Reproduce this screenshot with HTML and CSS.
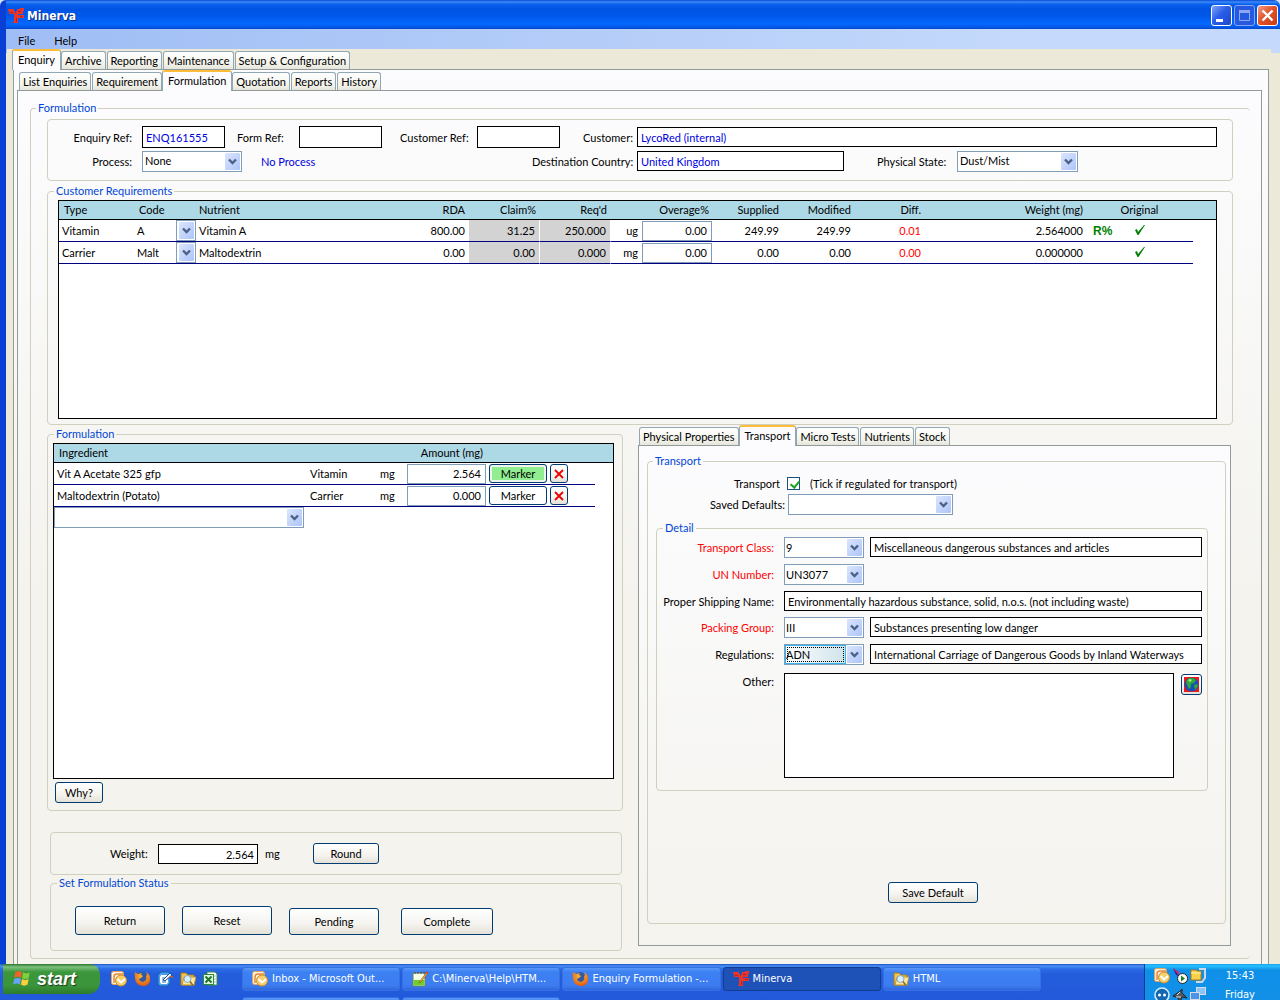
FILE: index.html
```html
<!DOCTYPE html>
<html lang="en">
<head>
  <meta charset="UTF-8">
  <title>Minerva</title>
  <link rel="stylesheet" href="styles.css">
</head>
<body>
  <!-- shared icons -->
  <svg class="sprite" width="0" height="0" aria-hidden="true">
    <defs>
      <linearGradient id="dropFill" x1="0" y1="0" x2="1" y2="1">
        <stop offset="0" stop-color="#dbe5fd"/>
        <stop offset="1" stop-color="#adc5f9"/>
      </linearGradient>
      <radialGradient id="foxFill" cx="0.5" cy="0.3" r="0.8">
        <stop offset="0" stop-color="#ffc23a"/>
        <stop offset="1" stop-color="#d8480c"/>
      </radialGradient>
    </defs>
    <symbol id="drop" viewBox="0 0 15 17">
      <rect width="15" height="17" rx="1" fill="url(#dropFill)"/>
      <path d="M4 6.500l3.500 3.500L11 6.500" fill="none" stroke="#4d6185" stroke-width="2.400"/>
    </symbol>
    <symbol id="logo" viewBox="0 0 16 16">
      <path d="M0 1h6v2H0zM1 3h6v3H1zM9 1h4v3H9zM12 0h4v3h-4zM8 3h7v3H8zM6 5h4v10H6zM9 7h7v3H9zM5 14h5v1H5z" fill="#e8352c"/>
      <path d="M2 4.500h3M10 3.500h3M12 8.500h3M8.500 10v4" stroke="#b82020" fill="none"/>
    </symbol>
    <symbol id="outlook" viewBox="0 0 16 16">
      <rect x="0.500" y="0.500" width="12" height="13" rx="2" fill="#fff1dc" stroke="#e6a15a"/>
      <path d="M3 12V6a3 3 0 0 1 3-3h6" fill="none" stroke="#e08a3c" stroke-width="1.500"/>
      <circle cx="10" cy="9.500" r="5.500" fill="#f7cf6e" stroke="#c98b2a"/>
      <path d="M6.500 8l3.500 3.500L14 8" fill="none" stroke="#fff" stroke-width="2"/>
    </symbol>
    <symbol id="firefox" viewBox="0 0 16 16">
      <circle cx="8" cy="7" r="6" fill="#35589e"/>
      <path d="M1 1l3 2 4-1-1 2 2 1-2 2-2 1 1 2 3 1c3-1 4-3 3-6l1-1c0-2-1-2-1-3 4 2 5 6 4 9-1 4-4 5-7 5-4 0-8-3-8-8 0-2-1-4 0-6z" fill="url(#foxFill)"/>
    </symbol>
    <symbol id="desktop" viewBox="0 0 16 16">
      <path d="M1 4l3-3h8l1 2v9l-3 3H3l-2-2z" fill="#49a0ea" stroke="#1a62b8"/>
      <path d="M4 4h7v7l-1 2H4l-1-2V6z" fill="#fff"/>
      <path d="M5 7h4M5 9h3M5 11h4" stroke="#2a7ad0"/>
      <path d="M6 9l7-7 2 2-7 6z" fill="#eaf4ff" stroke="#1b4c94"/>
      <path d="M12 5h4l-1 2z" fill="#e85a1c"/>
    </symbol>
    <symbol id="folder" viewBox="0 0 16 16">
      <path d="M1 2h5l2 2h6v10H1z" fill="#f3c64f" stroke="#a87a1c"/>
      <path d="M4 6h12l-2 8H2z" fill="#ffe79a" stroke="#c1922b"/>
      <circle cx="7.500" cy="8" r="3.500" fill="#d5efff" stroke="#8aa9c4"/>
      <path d="M10 10.500l3 4" stroke="#8a6d2a" stroke-width="1.500"/>
    </symbol>
    <symbol id="excel" viewBox="0 0 16 16">
      <path d="M4 1h8l2 2v11H4z" fill="#fff" stroke="#3c8a46"/>
      <path d="M11 5h2M11 8h2M11 11h2" stroke="#8dc294"/>
      <rect x="0.500" y="3.500" width="10" height="10" fill="#e3f4e2" stroke="#2f8a3b"/>
      <path d="M2.500 5.500l6 6M8.500 5.500l-6 6" stroke="#1d7a2c" stroke-width="2"/>
    </symbol>
    <symbol id="notepad" viewBox="0 0 16 16">
      <path d="M1 2h12v13H1z" fill="#f4ffe8" stroke="#6b7a62"/>
      <path d="M1.500 9h11v5.500h-11z" fill="#6fce2c"/>
      <path d="M3 1v2M6 1v2M9 1v2M12 1v2" stroke="#444"/>
      <path d="M15 1L8 10l-1 2 2-1 7-9z" fill="#f7b83a" stroke="#8a4a10" stroke-width="0.600"/>
      <path d="M14 1l2 1.500" stroke="#e8321c" stroke-width="1.500"/>
    </symbol>
    <symbol id="cross" viewBox="0 0 10 10">
      <path d="M1 1l8 8M9 1L1 9" stroke="#f00000" stroke-width="1.800"/>
    </symbol>
    <symbol id="tick" viewBox="0 0 12 11">
      <path d="M1 6l2-1 1 3 6-7 1 0-6.500 10H3.500z" fill="#008000"/>
    </symbol>
  </svg>

  <div class="window">
    <header class="titlebar">
      <svg class="icon"><use href="#logo"/></svg>
      <h1>Minerva</h1>
      <div class="win-buttons">
        <button class="win-btn" aria-label="Minimize"><svg viewBox="0 0 19 19"><path d="M4 13h7v3H4z" fill="#fff"/></svg></button>
        <button class="win-btn dim" aria-label="Maximize"><svg viewBox="0 0 19 19"><path d="M4.500 5.500h10v9h-10z" fill="none" stroke="#8fa6f0"/><path d="M4 4h11v3H4z" fill="#8fa6f0"/></svg></button>
        <button class="win-btn close" aria-label="Close"><svg viewBox="0 0 19 19"><path d="M4.500 4.500l10 10M14.500 4.500l-10 10" stroke="#fff" stroke-width="2.400"/></svg></button>
      </div>
    </header>

    <nav class="menubar">
      <a href="#">File</a>
      <a href="#">Help</a>
    </nav>

    <div class="main">
      <div class="tabs">
        <button class="tab active">Enquiry</button>
        <button class="tab">Archive</button>
        <button class="tab">Reporting</button>
        <button class="tab">Maintenance</button>
        <button class="tab">Setup &amp; Configuration</button>
      </div>
      <div class="page outer-page">
        <div class="tabs sub-tabs">
          <button class="tab">List Enquiries</button>
          <button class="tab">Requirement</button>
          <button class="tab active">Formulation</button>
          <button class="tab">Quotation</button>
          <button class="tab">Reports</button>
          <button class="tab">History</button>
        </div>
        <div class="page inner-page">
          <fieldset class="formulation">
            <legend>Formulation</legend>

            <div class="panel enquiry">
              <div class="row">
                <label class="first" for="enquiryRef">Enquiry Ref:</label>
                <input class="box ref" type="text" id="enquiryRef" value="ENQ161555">
                <label class="form-ref" for="formRef">Form Ref:</label>
                <input class="box ref" type="text" id="formRef">
                <label class="customer-ref" for="customerRef">Customer Ref:</label>
                <input class="box ref" type="text" id="customerRef">
                <label class="customer" for="customer">Customer:</label>
                <input class="box grow" type="text" id="customer" value="LycoRed (internal)">
              </div>
              <div class="row">
                <label class="first" for="process">Process:</label>
                <span class="combo process"><select id="process"><option>None</option></select><svg><use href="#drop"/></svg></span>
                <span class="process-name">No Process</span>
                <label class="country" for="country">Destination Country:</label>
                <input class="box country-box" type="text" id="country" value="United Kingdom">
                <label class="state" for="state">Physical State:</label>
                <span class="combo state-box"><select id="state"><option>Dust/Mist</option></select><svg><use href="#drop"/></svg></span>
              </div>
            </div>

            <fieldset class="requirements">
              <legend>Customer Requirements</legend>
              <div class="list">
                <table>
                  <colgroup>
                    <col class="w75"><col class="w42"><col class="w20"><col>
                    <col class="w70"><col class="w71"><col class="w71"><col class="w31"><col class="w71">
                    <col class="w70"><col class="w72"><col class="w70"><col class="w162"><col class="w30">
                    <col class="w45"><col class="w31"><col class="w23">
                  </colgroup>
                  <thead>
                    <tr>
                      <th>Type</th><th>Code</th><th></th><th class="nutrient">Nutrient</th>
                      <th class="num">RDA</th><th class="num">Claim%</th><th class="num">Req'd</th><th></th><th class="num">Overage%</th>
                      <th class="num">Supplied</th><th class="num">Modified</th><th class="num">Diff.</th><th class="num">Weight (mg)</th><th></th>
                      <th class="mid">Original</th><th></th><th></th>
                    </tr>
                  </thead>
                  <tbody>
                    <tr>
                      <td>Vitamin</td><td>A</td>
                      <td class="cell"><span class="combo code"><select aria-label="Code"><option></option></select><svg><use href="#drop"/></svg></span></td>
                      <td class="nutrient">Vitamin A</td>
                      <td class="num">800.00</td><td class="num grey">31.25</td><td class="num grey">250.000</td><td class="num">ug</td>
                      <td class="cell"><input class="edit" type="text" value="0.00" aria-label="Overage"></td>
                      <td class="num">249.99</td><td class="num">249.99</td><td class="num red">0.01</td><td class="num">2.564000</td>
                      <td class="rpc">R%</td><td class="mid"><svg class="tick"><use href="#tick"/></svg></td><td></td><td class="edge"></td>
                    </tr>
                    <tr>
                      <td>Carrier</td><td>Malt</td>
                      <td class="cell"><span class="combo code"><select aria-label="Code"><option></option></select><svg><use href="#drop"/></svg></span></td>
                      <td class="nutrient">Maltodextrin</td>
                      <td class="num">0.00</td><td class="num grey">0.00</td><td class="num grey">0.000</td><td class="num">mg</td>
                      <td class="cell"><input class="edit" type="text" value="0.00" aria-label="Overage"></td>
                      <td class="num">0.00</td><td class="num">0.00</td><td class="num red">0.00</td><td class="num">0.000000</td>
                      <td></td><td class="mid"><svg class="tick"><use href="#tick"/></svg></td><td></td><td class="edge"></td>
                    </tr>
                  </tbody>
                </table>
              </div>
            </fieldset>

            <div class="columns">
              <div class="left">
                <fieldset class="ingredients">
                  <legend>Formulation</legend>
                  <div class="list">
                    <table>
                      <colgroup>
                        <col><col class="w70"><col class="w30"><col class="w80"><col class="w62"><col class="w46"><col class="w18">
                      </colgroup>
                      <thead>
                        <tr><th>Ingredient</th><th></th><th></th><th class="num">Amount (mg)</th><th></th><th></th><th></th></tr>
                      </thead>
                      <tbody>
                        <tr>
                          <td>Vit A Acetate 325 gfp</td><td>Vitamin</td><td>mg</td>
                          <td class="cell"><input class="edit" type="text" value="2.564" aria-label="Amount"></td>
                          <td class="cell"><button class="btn marker on">Marker</button></td>
                          <td class="cell"><button class="btn remove" aria-label="Remove"><svg><use href="#cross"/></svg></button></td>
                          <td class="edge"></td>
                        </tr>
                        <tr>
                          <td>Maltodextrin (Potato)</td><td>Carrier</td><td>mg</td>
                          <td class="cell"><input class="edit" type="text" value="0.000" aria-label="Amount"></td>
                          <td class="cell"><button class="btn marker">Marker</button></td>
                          <td class="cell"><button class="btn remove" aria-label="Remove"><svg><use href="#cross"/></svg></button></td>
                          <td class="edge"></td>
                        </tr>
                      </tbody>
                    </table>
                    <span class="combo new-ingredient"><select aria-label="Add ingredient"><option></option></select><svg><use href="#drop"/></svg></span>
                  </div>
                  <button class="btn why">Why?</button>
                </fieldset>

                <div class="panel weight">
                  <label for="weight">Weight:</label>
                  <input class="box total" type="text" id="weight" value="2.564">
                  <span class="unit">mg</span>
                  <button class="btn round">Round</button>
                </div>

                <fieldset class="status">
                  <legend>Set Formulation Status</legend>
                  <div class="status-buttons">
                    <button class="btn">Return</button>
                    <button class="btn">Reset</button>
                    <button class="btn short">Pending</button>
                    <button class="btn short complete">Complete</button>
                  </div>
                </fieldset>
              </div>

              <div class="right">
                <div class="tabs">
                  <button class="tab">Physical Properties</button>
                  <button class="tab active">Transport</button>
                  <button class="tab">Micro Tests</button>
                  <button class="tab">Nutrients</button>
                  <button class="tab">Stock</button>
                </div>
                <div class="page transport-page">
                  <fieldset class="transport">
                    <legend>Transport</legend>
                    <div class="row">
                      <label class="tick-label" for="regulated">Transport</label>
                      <input class="check" type="checkbox" id="regulated" checked>
                      <span>(Tick if regulated for transport)</span>
                    </div>
                    <div class="row defaults">
                      <label for="defaults">Saved Defaults:</label>
                      <span class="combo"><select id="defaults"><option></option></select><svg><use href="#drop"/></svg></span>
                    </div>

                    <fieldset class="detail">
                      <legend>Detail</legend>
                      <div class="detail-grid">
                        <label class="red" for="class">Transport Class:</label>
                        <span class="combo"><select id="class"><option>9</option></select><svg><use href="#drop"/></svg></span>
                        <input class="box" type="text" value="Miscellaneous dangerous substances and articles" aria-label="Class description">

                        <label class="red" for="un">UN Number:</label>
                        <span class="combo"><select id="un"><option>UN3077</option></select><svg><use href="#drop"/></svg></span>
                        <span></span>

                        <label for="shipping">Proper Shipping Name:</label>
                        <input class="box wide" type="text" id="shipping" value="Environmentally hazardous substance, solid, n.o.s. (not including waste)">

                        <label class="red" for="packing">Packing Group:</label>
                        <span class="combo"><select id="packing"><option>III</option></select><svg><use href="#drop"/></svg></span>
                        <input class="box" type="text" value="Substances presenting low danger" aria-label="Packing description">

                        <label for="regs">Regulations:</label>
                        <span class="combo focused"><select id="regs"><option>ADN</option></select><svg><use href="#drop"/></svg></span>
                        <input class="box" type="text" value="International Carriage of Dangerous Goods by Inland Waterways" aria-label="Regulation description">

                        <label for="other">Other:</label>
                        <div class="other wide">
                          <textarea id="other"></textarea>
                          <button class="btn globe" aria-label="Look up on the web">
                            <svg viewBox="0 0 15 15"><rect width="15" height="15" fill="#f01818"/><circle cx="7.500" cy="7.500" r="7" fill="#1450b8"/><path d="M2 4l3-3h4l3 2-2 3-3 1v3l-2 2-2-4zM10 8l3-1 1 2-3 4z" fill="#2faa3a"/><path d="M4 3l2-1 2 1-2 2z" fill="#a6f088"/></svg>
                          </button>
                        </div>
                      </div>
                    </fieldset>
                    <button class="btn save">Save Default</button>
                  </fieldset>
                </div>
              </div>
            </div>
          </fieldset>
        </div>
      </div>
    </div>
  </div>

  <footer class="taskbar">
    <button class="start">
      <svg viewBox="0 0 18 18"><path d="M3 3q3-2 6 0L8 8q-3-2-6 0z" fill="#f0622a"/><path d="M10 3q3 2 6 0l-1 5q-3 2-6 0z" fill="#7fd03c"/><path d="M2 9q3-2 6 0l-1 5q-3-2-6 0z" fill="#6aa4f8"/><path d="M9 9q3 2 6 0l-1 5q-3 2-6 0z" fill="#fbd03a"/></svg>
      start
    </button>
    <div class="quick">
      <svg class="icon"><use href="#outlook"/></svg>
      <svg class="icon"><use href="#firefox"/></svg>
      <svg class="icon"><use href="#desktop"/></svg>
      <svg class="icon"><use href="#folder"/></svg>
      <svg class="icon"><use href="#excel"/></svg>
    </div>
    <div class="tasks">
      <button class="task"><svg class="icon"><use href="#outlook"/></svg>Inbox - Microsoft Out...</button>
      <button class="task"><svg class="icon"><use href="#notepad"/></svg>C:\Minerva\Help\HTM...</button>
      <button class="task"><svg class="icon"><use href="#firefox"/></svg>Enquiry Formulation -...</button>
      <button class="task active"><svg class="icon"><use href="#logo"/></svg>Minerva</button>
      <button class="task"><svg class="icon"><use href="#folder"/></svg>HTML</button>
      <button class="task" aria-label="More windows"></button>
      <button class="task" aria-label="More windows"></button>
    </div>
    <div class="tray">
      <div class="tray-icons">
        <svg class="icon"><use href="#outlook"/></svg>
        <svg class="icon" viewBox="0 0 16 16"><path d="M1 0l6 4-1 4z" fill="#e02060"/><path d="M1 0l3 7 3 1z" fill="#3020a0"/><circle cx="10.500" cy="10.500" r="5" fill="#fff" stroke="#222"/><path d="M9 7.500v6l4-3z" fill="#18801c"/></svg>
        <svg class="icon" viewBox="0 0 16 16"><path d="M9 1h6v9l-3 4H6" fill="none" stroke="#cfd8e4" stroke-width="2"/><path d="M1 2h5l1 1h4v9H1z" fill="#fbd14a" stroke="#a8781c"/><path d="M1 5h10" stroke="#fff2b0"/></svg>
        <svg class="icon" viewBox="0 0 16 16"><circle cx="8" cy="8" r="7" fill="#1468b0" stroke="#d8ecff" stroke-width="1.500"/><circle cx="5.500" cy="8" r="1.500" fill="#fff"/><circle cx="10.500" cy="8" r="1.500" fill="#fff"/></svg>
        <svg class="icon" viewBox="0 0 16 16"><path d="M1 9l6-4 3-3v4l5 5-5-1-2 5-2-4z" fill="#505860" stroke="#20242a"/><path d="M5 8l3-3M4 10h5" stroke="#e8e8e8"/></svg>
        <svg class="icon" viewBox="0 0 16 16"><rect x="6.500" y="0.500" width="9" height="7" fill="#8cc4f8" stroke="#d6dce8"/><rect x="0.500" y="5.500" width="9" height="7" fill="#4c94e8" stroke="#d6dce8"/><path d="M3 15h6" stroke="#c6ccd8" stroke-width="2"/></svg>
      </div>
      <div class="clock"><span>15:43</span><span>Friday</span></div>
    </div>
  </footer>
</body>
</html>
```
FILE: styles.css
```css
* {
  box-sizing: border-box;
}
body {
  margin: 0;
  height: 100vh;
  display: flex;
  flex-direction: column;
  overflow: hidden;
  font-family: Lato, "Liberation Sans", Arial, sans-serif;
  font-size: 11px;
  line-height: 14px;
  color: #000;
  background: #d4e2f8;
}
button, input, select, textarea {
  font: inherit;
  color: inherit;
  margin: 0;
}
.sprite {
  position: absolute;
}
.icon {
  width: 16px;
  height: 16px;
  flex: none;
}

/* window frame */
.window {
  flex: 1;
  min-height: 0;
  overflow: hidden;
  display: flex;
  flex-direction: column;
  border-left: 6px solid #0a3fd6;
  border-radius: 6px 6px 0 0;
  background: #ece9d8;
}
.titlebar {
  display: flex;
  align-items: center;
  height: 29px;
  flex: none;
  margin-left: -3px;
  padding: 2px 2px 0 5px;
  background: linear-gradient(#0a49d8 0, #3b8cf8 2px, #0c62ee 4px, #0054e3 9px, #0058ea 16px, #0468fe 24px, #0353e0 28px, #0540c0 29px);
}
.titlebar h1 {
  flex: 1;
  margin: 0 0 0 3px;
  font: bold 12px/16px "DejaVu Sans Condensed", "DejaVu Sans", sans-serif;
  color: #fff;
  text-shadow: 1px 1px #0a2a80;
}
.win-buttons {
  display: flex;
  gap: 2px;
}
.win-btn {
  width: 21px;
  height: 21px;
  padding: 0;
  border: 1px solid #fff;
  border-radius: 3px;
  background: linear-gradient(135deg, #7ea4f6, #2a5ee8 45%, #1c48cc);
}
.win-btn svg {
  display: block;
  width: 19px;
  height: 19px;
}
.win-btn.dim {
  border-color: #86a4f2;
  background: #2459e0;
}
.win-btn.close {
  background: linear-gradient(135deg, #f0a088, #e2532c 45%, #c83a10);
}
.menubar {
  display: flex;
  flex: none;
  gap: 19px;
  height: 24px;
  padding: 5px 12px;
  background: linear-gradient(90deg, #9fbdf5, #c4d9fb 80%);
}
.menubar a {
  color: #000;
  text-decoration: none;
}

/* tabs */
.main {
  flex: 1;
  min-height: 0;
  display: flex;
  flex-direction: column;
  margin: -4px 9px 0 1px;
  padding: 0 2px 0 6px;
  background: #ece9d8;
  z-index: 1;
}
.tabs {
  display: flex;
  align-items: flex-end;
  gap: 1px;
  height: 21px;
  margin-bottom: -1px;
}
.tab {
  height: 18px;
  padding: 0 3px;
  margin-bottom: 1px;
  border: 1px solid #91a7b4;
  border-bottom: 0;
  border-radius: 3px 3px 0 0;
  background: linear-gradient(#fff, #f3f3ec 70%, #e6e5da);
  white-space: nowrap;
}
.tab.active {
  position: relative;
  height: 21px;
  margin: 0 -1px;
  padding: 0 5px 2px;
  border-top: 2px solid #ffbc38;
  background: #fcfcfe;
}
.page {
  border: 1px solid #919b9c;
  background: linear-gradient(#fcfcfe, #f4f3ee 500px);
}
.outer-page {
  flex: 1;
  display: flex;
  flex-direction: column;
  padding: 0 6px 0 3px;
  border-bottom: 0;
}
.sub-tabs {
  padding-left: 2px;
}
.inner-page {
  flex: 1;
  padding: 10px 11px 0 12px;
  border-bottom: 0;
}

/* group boxes */
fieldset {
  min-width: 0;
  margin: 0;
  padding: 0;
  border: 1px solid #d0d0bf;
  border-radius: 4px;
}
legend {
  margin-left: 5px;
  padding: 0 2px;
  color: #0046d5;
}
.panel {
  border: 1px solid #d0d0bf;
  border-radius: 4px;
}
.formulation {
  padding: 4px 17px 7px 16px;
  border-right: 0;
}
.formulation > legend {
  margin-left: -11px;
}
.row {
  display: flex;
  align-items: center;
}

/* fields */
.box {
  height: 20px;
  min-width: 0;
  padding: 1px 3px 0;
  border: 1px solid #000;
  border-radius: 0;
  background: #fff;
}
.grow {
  flex: 1;
}
.combo {
  position: relative;
  display: block;
  flex: none;
  height: 21px;
}
.combo select {
  appearance: none;
  display: block;
  width: 100%;
  height: 100%;
  padding: 0 1px;
  border: 1px solid #7f9db9;
  border-radius: 0;
  background: #fff;
}
.combo svg {
  position: absolute;
  top: 2px;
  right: 2px;
  width: 15px;
  height: 17px;
  pointer-events: none;
}
.btn {
  padding: 0;
  border: 1px solid #003c74;
  border-radius: 3px;
  background: linear-gradient(#fff, #f4f3ee 60%, #e4e1d6);
}
.red {
  color: #f00;
}

/* enquiry header */
.enquiry {
  height: 62px;
  padding: 6px 15px 0 0;
}
.enquiry .row {
  height: 22px;
}
.enquiry .row + .row {
  margin-top: 2px;
}
.enquiry label, .process-name {
  flex: none;
  padding-top: 2px;
}
.enquiry .box {
  color: #0000e0;
}
.enquiry select {
  padding-left: 2px;
}
.enquiry .first {
  width: 94px;
  padding-right: 10px;
  text-align: right;
}
.ref {
  width: 83px;
  height: 22px;
}
.form-ref {
  width: 74px;
  padding-left: 12px;
}
.customer-ref {
  width: 95px;
  padding-left: 18px;
}
.customer {
  width: 77px;
  padding-left: 23px;
}
.process {
  width: 100px;
}
.process-name {
  width: 290px;
  padding-left: 19px;
  color: #0000e0;
}
.country {
  width: 105px;
}
.country-box {
  width: 207px;
}
.state {
  width: 113px;
  padding-left: 33px;
}
.state-box {
  width: 121px;
}

/* lists */
.list {
  border: 1px solid #000;
  background: #fff;
}
table {
  width: 100%;
  table-layout: fixed;
  border-collapse: separate;
  border-spacing: 0;
}
th {
  height: 19px;
  padding: 0 5px;
  font-weight: normal;
  text-align: left;
  white-space: nowrap;
  background: #add8e6;
  border-bottom: 1px solid #000;
}
td {
  height: 22px;
  padding: 0 3px;
  white-space: nowrap;
  border-bottom: 1px solid #000080;
}
td.edge {
  border-bottom: 0;
}
.nutrient {
  padding-left: 3px;
}
.num {
  padding-right: 4px;
  text-align: right;
}
.mid {
  padding: 0;
  text-align: center;
}
.cell {
  padding: 0;
}
.grey {
  background: #d3d3d3;
  border-right: 1px solid #fff;
}
.rpc {
  padding-left: 6px;
  font: bold 12px/14px "Liberation Sans", Arial, sans-serif;
  color: #008000;
}
.tick {
  width: 12px;
  height: 11px;
}
.edit {
  display: block;
  width: calc(100% - 1px);
  height: 20px;
  padding: 0 4px;
  border: 1px solid #7f9db9;
  text-align: right;
  background: #fff;
}
.w18 { width: 18px; }
.w20 { width: 20px; }
.w23 { width: 23px; }
.w30 { width: 30px; }
.w31 { width: 31px; }
.w42 { width: 42px; }
.w45 { width: 45px; }
.w46 { width: 46px; }
.w62 { width: 62px; }
.w70 { width: 70px; }
.w71 { width: 71px; }
.w72 { width: 72px; }
.w75 { width: 75px; }
.w80 { width: 80px; }
.w162 { width: 162px; }

.requirements {
  margin-top: 3px;
  padding: 2px 15px 5px 10px;
}
.requirements legend {
  margin-left: -4px;
}
.requirements .list {
  min-height: 219px;
}

/* lower half */
.columns {
  display: grid;
  grid-template-columns: 576fr 593fr;
  gap: 15px;
  margin: 2px 2px 0 0;
}
.left {
  display: flex;
  flex-direction: column;
}
.ingredients {
  padding: 2px 8px 7px 5px;
}
.ingredients legend {
  margin-left: 1px;
}
.ingredients .list {
  min-height: 336px;
}
.marker, .remove {
  display: block;
  height: 19px;
  margin-left: 2px;
}
.marker {
  width: 58px;
  background: #fff;
}
.marker.on {
  background: #90ee90;
  box-shadow: inset 0 0 0 2px #eef4ea;
}
.remove {
  width: 18px;
  margin-left: 1px;
}
.remove svg {
  display: block;
  width: 10px;
  height: 10px;
  margin: auto;
}
.new-ingredient {
  width: 250px;
}
.why {
  display: block;
  width: 48px;
  height: 21px;
  margin: 3px 0 0 2px;
}
.weight {
  display: flex;
  align-items: center;
  height: 43px;
  margin: 21px 1px 0 3px;
  padding-left: 59px;
}
.total {
  width: 100px;
  height: 20px;
  margin-left: 10px;
  text-align: right;
}
.weight label {
  width: 38px;
}
.unit {
  width: 55px;
  padding-left: 7px;
}
.round {
  width: 66px;
  height: 21px;
}
.status {
  margin: 1px 1px 0 3px;
  padding: 16px 0 15px 24px;
}
.status legend {
  margin-left: -18px;
}
.status-buttons {
  display: flex;
  align-items: flex-end;
  gap: 17px;
}
.status .btn {
  width: 90px;
  height: 29px;
}
.status .short {
  height: 27px;
}
.status .complete {
  width: 92px;
  margin-left: 5px;
}

/* transport */
.right .tabs {
  margin-top: -2px;
  padding-left: 1px;
}
.transport-page {
  min-height: 500px;
  padding: 8px 4px 21px 8px;
}
.transport {
  height: 470px;
}
.transport > .row {
  height: 21px;
}
.transport .tick-label {
  width: 132px;
  margin-right: 7px;
  text-align: right;
}
.check {
  appearance: none;
  width: 13px;
  height: 13px;
  margin-right: 10px;
  border: 1px solid #1c5180;
  background: #fff;
}
.check:checked::after {
  content: "";
  display: block;
  width: 4px;
  height: 7px;
  margin: 1px 0 0 4px;
  border: solid #21a121;
  border-width: 0 2px 2px 0;
  transform: rotate(40deg);
}
.transport > .row:nth-of-type(1) {
  margin-top: 5px;
}
.defaults label {
  width: 137px;
  margin-right: 3px;
  text-align: right;
}
.defaults .combo {
  width: 165px;
}
.detail {
  margin: 6px 17px 0 8px;
  padding: 2px 5px 12px;
}
.detail legend {
  margin-left: 1px;
}
.detail-grid {
  display: grid;
  grid-template-columns: 116px 80px 1fr;
  gap: 6px;
}
.detail-grid label {
  padding: 4px 4px 0 0;
  text-align: right;
  white-space: nowrap;
}
.wide {
  grid-column: 2 / 4;
}
.focused::before {
  content: "";
  position: absolute;
  inset: 1px 18px 1px 1px;
  border: 1px solid #35b4f0;
  outline: 1px dotted #000;
  outline-offset: -3px;
  pointer-events: none;
}
.focused select {
  background: linear-gradient(90deg, #fff, #cfe3ea 61px, #fff 61px);
}
.other {
  display: flex;
  align-items: flex-start;
  gap: 7px;
  margin-top: 2px;
}
.other textarea {
  flex: 1;
  height: 105px;
  padding: 3px;
  border: 1px solid #000;
  resize: none;
  background: #fff;
}
.globe {
  width: 21px;
  height: 21px;
  margin-top: 1px;
}
.globe svg {
  display: block;
  width: 15px;
  height: 15px;
  margin: auto;
}
.save {
  display: block;
  width: 90px;
  height: 21px;
  margin: 91px 0 0 240px;
}

/* taskbar */
.taskbar {
  display: flex;
  flex: none;
  height: 36px;
  padding-left: 3px;
  overflow: hidden;
  color: #fff;
  font: 11px/14px "DejaVu Sans Condensed", "DejaVu Sans", sans-serif;
  background: linear-gradient(#1c50c4 0, #4a90f4 2px, #2a6ae6 5px, #245ddb 10px, #2259dc 100%);
}
.start {
  display: flex;
  align-items: center;
  width: 97px;
  height: 30px;
  padding: 0 0 0 9px;
  gap: 5px;
  border: 0;
  border-radius: 0 10px 12px 0;
  font: italic bold 18px/20px "Liberation Sans", Arial, sans-serif;
  text-shadow: 1px 1px 1px #1c3c1c;
  background: linear-gradient(#2c742c 0, #7cc07c 3px, #3c963c 8px, #3a943a 22px, #2c7a2c 30px);
}
.start svg {
  width: 20px;
  height: 20px;
}
.quick {
  display: flex;
  gap: 7px;
  width: 142px;
  padding: 7px 0 0 11px;
}
.tasks {
  flex: 1;
  display: grid;
  grid-template-columns: repeat(5, 1fr);
  grid-auto-rows: 24px;
  gap: 6px 2px;
  padding: 3px 103px 0 0;
}
.task {
  display: flex;
  align-items: center;
  gap: 4px;
  min-width: 0;
  padding: 0 9px;
  border: 1px solid #3670e4;
  border-radius: 3px;
  white-space: nowrap;
  background: linear-gradient(#5a98f8, #3c81f3 4px, #3c7cf0 80%, #2f68dc);
}
.task.active {
  border-color: #123c90;
  background: #1e52b7;
}
.tray {
  display: flex;
  width: 136px;
  border-left: 1px solid #0a3c90;
  background: linear-gradient(#1aa0f0 0, #28c0ff 2px, #0f90e8 6px, #1290e8);
}
.tray-icons {
  display: grid;
  grid-template-columns: repeat(3, 16px);
  grid-auto-rows: 16px;
  gap: 3px 2px;
  padding: 4px 0 0 9px;
}
.clock {
  display: grid;
  grid-auto-rows: 19px;
  flex: 1;
  padding: 5px 6px 0 0;
  text-align: center;
}
```
